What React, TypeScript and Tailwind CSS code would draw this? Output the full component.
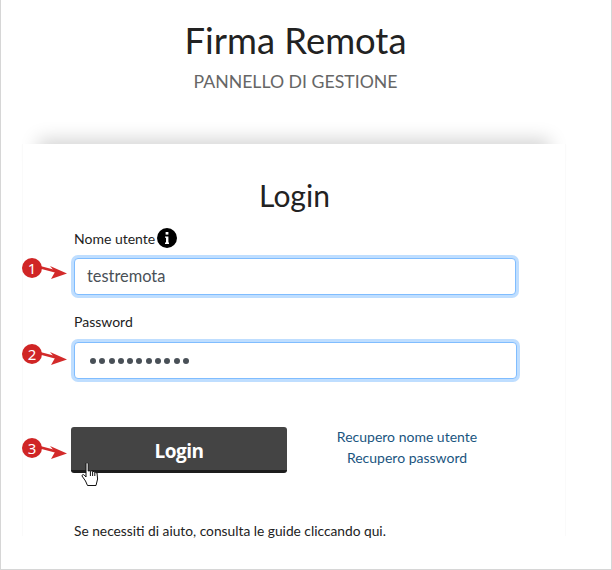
import React from 'react';

const font = "font-['Lato','Liberation_Sans',sans-serif]";

function Marker({ n, top }: { n: number; top: number }) {
  return (
    <div className="absolute left-[21px] w-[46px] h-[24px]" style={{ top }}>
      <svg width="46" height="24" viewBox="0 0 46 24" className="absolute left-0 top-0">
        <path d="M17 9 L36 14" stroke="#d32a2a" strokeWidth="2.4" fill="none" />
        <path d="M45 15.5 L28 8 L33 14 L29 21 Z" fill="#d32a2a" />
      </svg>
      <div className="absolute left-0 top-0 w-[20px] h-[20px] rounded-full bg-[#d02525] text-white text-[15px] leading-[20px] text-center font-['Noto_Sans',sans-serif]">
        {n}
      </div>
    </div>
  );
}

function HandCursor() {
  return (
    <svg width="18" height="25" viewBox="0 0 18 25" className="absolute left-[80px] top-[462px]">
      <path
        d="M5 1.5 C5 .6 7.2 .6 7.2 1.5 L7.2 9 L9.4 8.6 L11.6 9.2 L13.8 9.8 L16 11 L16.6 17 L15 23.5 L6.5 23.5 L4.5 19 L1 14 C.8 12.6 2.4 12.2 3.2 13 L5 15 Z"
        fill="#fff"
        stroke="#111"
        strokeWidth="1"
      />
      <path d="M9.4 9 V14 M11.6 9.4 V14 M13.8 10 V14" stroke="#111" strokeWidth="1" fill="none" />
    </svg>
  );
}

export default function App() {
  return (
    <div className={`${font} relative w-[612px] h-[570px] bg-white border-x border-b border-[#d6d6d6] overflow-hidden`}>
      <header className="h-[144px] pt-[19px] pr-[21px] text-center">
        <h1 className="text-[36.4px] leading-[42px] text-[#222] font-normal">Firma Remota</h1>
        <p className="mt-[9px] text-[17.7px] leading-[24px] text-[#666]">PANNELLO DI GESTIONE</p>
      </header>

      {/* card, the shadow only shows above its top edge */}
      <div className="relative ml-[21px] w-[544px] h-[392px]">
        <div className="absolute left-[20px] right-[20px] top-0 h-[20px] shadow-[0_-1px_18px_4px_rgba(0,0,0,0.17)]" />
        <div className="relative h-full bg-white border-x border-[#fafafa] pl-[51px]">
          <h2 className="pt-[33px] -ml-[50px] text-center text-[30px] leading-[36px] text-[#222] font-normal">
            Login
          </h2>

          <div className="mt-[14px] flex items-center h-[22px] text-[14px] text-[#222]">
            <span>Nome utente</span>
            <span className="ml-[2px] w-[20px] h-[20px] rounded-full bg-black text-white flex items-center justify-center">
              <svg width="4" height="12" viewBox="0 0 4 12">
                <rect x="0.6" y="0" width="2.8" height="2.6" fill="#fff" />
                <path d="M0 4.4 H3.4 V10.6 H4 V12 H0 V10.6 H1 V5.8 H0 Z" fill="#fff" />
              </svg>
            </span>
          </div>
          <div className="mt-[9px] w-[442px] h-[37px] flex items-center pl-[12px] bg-white rounded-[4px] border border-[#80bdff] shadow-[0_0_0_3px_#bfdeff] text-[16.4px] text-[#495057]">
            testremota
          </div>

          <div className="mt-[16px] h-[20px] flex items-center text-[14px] text-[#222]">Password</div>
          <div className="mt-[11px] w-[443px] h-[37px] flex items-center pl-[15px] gap-[3.3px] bg-white rounded-[4px] border border-[#80bdff] shadow-[0_0_0_3px_#bfdeff]">
            {Array.from({ length: 11 }).map((_, i) => (
              <span key={i} className="w-[6px] h-[6px] rounded-full bg-[#495057]" />
            ))}
          </div>

          <div className="mt-[48px] flex">
            <button className="-ml-[3px] w-[216px] h-[46px] pt-[6px] rounded-[3px] bg-[#444] border-b-[3px] border-[#1d1d1d] text-white text-[19px] font-bold font-['Open_Sans',sans-serif] tracking-[-0.5px]">
              Login
            </button>
            <div className="ml-[40px] -mt-[1px] w-[160px] text-center text-[14px] leading-[21px] text-[#1a5580] whitespace-nowrap">
              <div>Recupero nome utente</div>
              <div>Recupero password</div>
            </div>
          </div>

          <p className="mt-[48px] text-[13.75px] leading-[20px] text-[#222]">
            Se necessiti di aiuto, consulta le guide cliccando qui.
          </p>
        </div>
      </div>

      <Marker n={1} top={258} />
      <Marker n={2} top={344} />
      <Marker n={3} top={438} />
      <HandCursor />
    </div>
  );
}
